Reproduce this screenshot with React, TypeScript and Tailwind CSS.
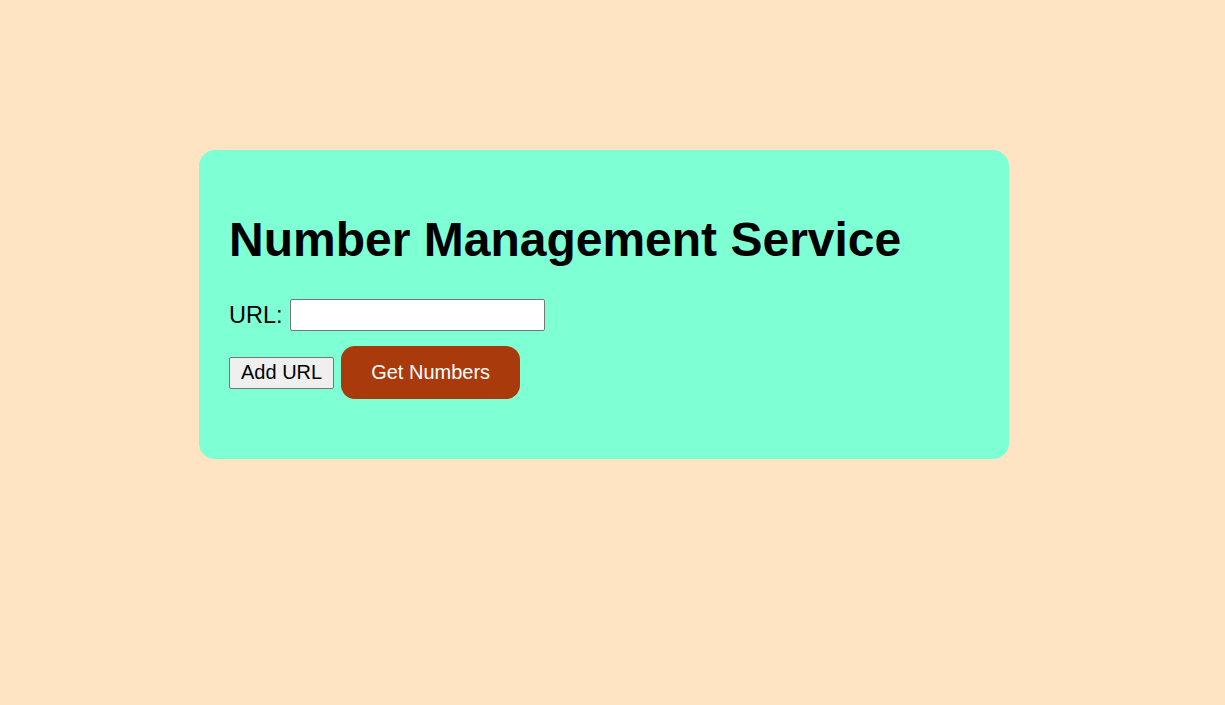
import React, { useState } from 'react';

const App: React.FC = () => {
    const [url, setUrl] = useState('');

    return (
        <div className="min-h-screen w-full bg-[#ffe4c4] font-['Liberation_Sans',Arial,sans-serif] text-black">
            <div className="pt-[150px] pl-[199px]">
                <div className="w-[810px] h-[309px] bg-[#7fffd4] rounded-[16px] pl-[30px] pt-[62px]">
                    <h1 className="text-[48px] leading-[55px] font-bold">Number Management Service</h1>

                    <div className="flex items-center mt-[32px]">
                        <label className="text-[23.5px] leading-[27px] mr-[7px]">URL:</label>
                        <input
                            type="text"
                            value={url}
                            onChange={(e) => setUrl(e.target.value)}
                            className="w-[255px] h-[32px] bg-white border border-[#767676] rounded-[2px] px-1 text-[16px]"
                        />
                    </div>

                    <div className="flex items-center mt-[15px]">
                        <button className="h-[32px] px-[11px] text-[20px] leading-[23px] bg-[#efefef] border border-[#767676] rounded-[2px]">
                            Add URL
                        </button>
                        <button className="ml-[7px] h-[53px] w-[179px] text-[20px] leading-[23px] text-white bg-[#a93a0b] rounded-[14px]">
                            Get Numbers
                        </button>
                    </div>
                </div>
            </div>
        </div>
    );
};

export default App;
